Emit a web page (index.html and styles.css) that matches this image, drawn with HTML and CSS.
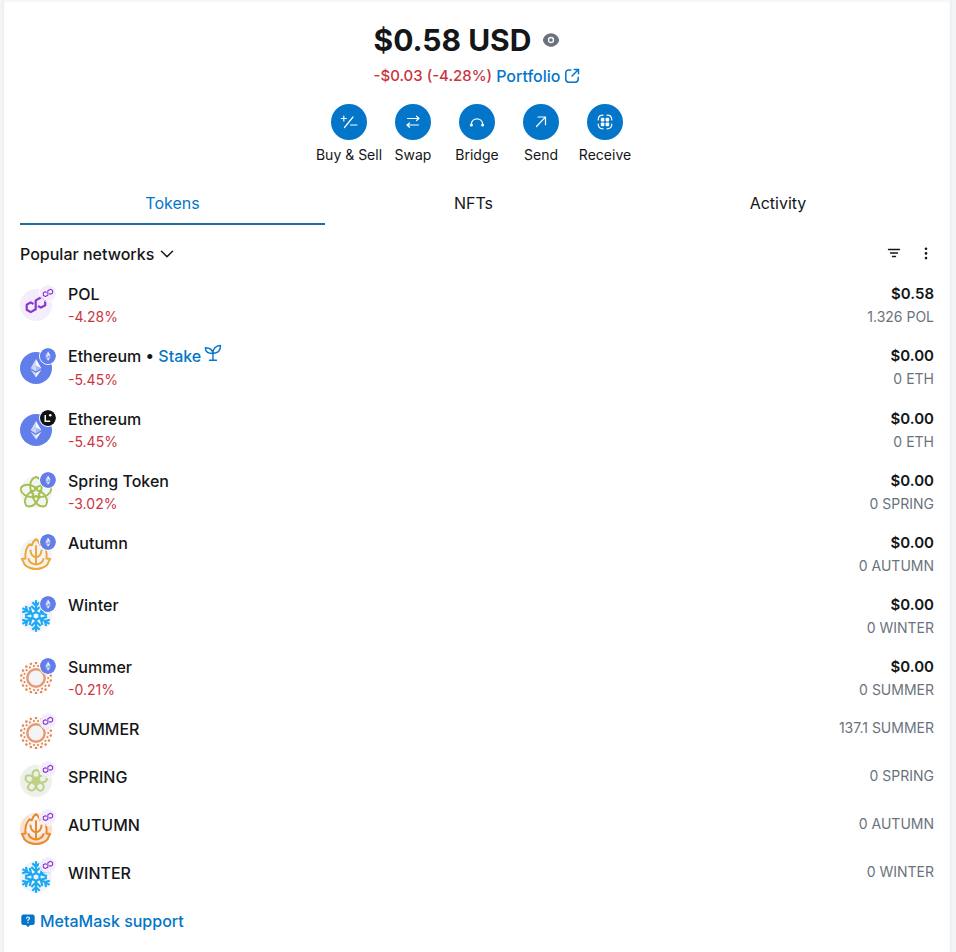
FILE: index.html
```html
<!DOCTYPE html>
<html lang="en">
<head>
<meta charset="utf-8">
<meta name="viewport" content="width=device-width, initial-scale=1">
<title>Wallet</title>
<link rel="stylesheet" href="styles.css">
</head>
<body>
<svg class="sprite" aria-hidden="true">
  <symbol id="eth" viewBox="0 0 32 32">
    <circle cx="16" cy="16" r="16" fill="#627eea"/>
    <path fill="#fff" fill-opacity=".7" d="M16 7l-5.400 9.200L16 13.800zM16 19.600V14l-5.400 2.300zM16 25.500v-4.600l-5.400-3.200z"/>
    <path fill="#fff" fill-opacity=".95" d="M16 7v6.800l5.400 2.400zM16 25.500v-4.600l5.400-3.200z"/>
    <path fill="#fff" fill-opacity=".45" d="M16 13.800v5.800l5.400-3.300z"/>
  </symbol>
  <symbol id="pol" viewBox="0 0 32 32">
    <circle cx="16" cy="16" r="16" fill="#f3edfc"/>
    <path fill="none" stroke="#8a35cf" stroke-width="2.200" stroke-linejoin="round" d="M13.500 15L10.700 13.400 6.700 15.700V20.800L10.700 23.100 15.700 20.300V11.400L20.900 8.500 25.200 10.900V16.200L20.900 18.600 18 17"/>
  </symbol>
  <symbol id="linea" viewBox="0 0 32 32">
    <circle cx="16" cy="16" r="16" fill="#121212"/>
    <path d="M10.500 10v12.500h10" fill="none" stroke="#fff" stroke-width="3"/>
    <circle cx="20.500" cy="10.500" r="2.500" fill="#fff"/>
  </symbol>
  <symbol id="flower" viewBox="0 0 32 32">
    <g fill="none" stroke="currentColor" stroke-width="1.900" stroke-linejoin="round">
      <path id="petal" d="M12 17.500C8.500 9.500 10.500 2.500 16 1c5.500 1.500 7.500 8.500 4 16.500"/>
      <use href="#petal" transform="rotate(72 16 17)"/>
      <use href="#petal" transform="rotate(144 16 17)"/>
      <use href="#petal" transform="rotate(216 16 17)"/>
      <use href="#petal" transform="rotate(288 16 17)"/>
      <path d="M16 11.500l1.700 3.400 3.700.5-2.700 2.600.7 3.700-3.400-1.800-3.400 1.800.7-3.700-2.700-2.600 3.700-.5z"/>
    </g>
  </symbol>
  <symbol id="spring" viewBox="0 0 32 32">
    <circle cx="16" cy="16" r="16" fill="#f2f4f6"/>
    <use href="#flower" color="#a5bf4e"/>
  </symbol>
  <symbol id="spring-small" viewBox="0 0 32 32">
    <circle cx="16" cy="16" r="16" fill="#eef0ec"/>
    <g fill="none" stroke="#bdd182" stroke-width="2">
      <path id="loop" d="M13.500 12.500C11.500 9 12.500 5.500 16 5s4.500 4 2.500 7.500L16 15.500z"/>
      <use href="#loop" transform="rotate(72 16 16)"/>
      <use href="#loop" transform="rotate(144 16 16)"/>
      <use href="#loop" transform="rotate(216 16 16)"/>
      <use href="#loop" transform="rotate(288 16 16)"/>
      <circle cx="16" cy="16" r="3.500"/>
    </g>
  </symbol>
  <symbol id="leaf" viewBox="0 0 32 32">
    <g fill="none" stroke="currentColor" stroke-width="2" stroke-linecap="round" stroke-linejoin="round">
      <path d="M16 1.200c-2 1.300-3.600 3.400-4.200 6L9.300 6.300C6.500 9.500 4.700 14 5.500 20.500L1.800 21C3.600 23.500 3.900 25 4.400 26.300c3 3.200 7 4.700 11.600 4.700s8.600-1.500 11.600-4.700c.5-1.300.8-2.800 2.600-5.300L26.500 20.500c.8-6.500-1-11-3.800-14.200l-2.500.9c-.6-2.600-2.200-4.700-4.200-6z"/>
      <path d="M16 8v18.500M16 19.500c-3.500-1-5.300-3.300-5.500-7M16 19.500c3.500-1 5.300-3.300 5.500-7M16 26.500c-4.500-.5-6.700-2.200-7.500-5.500M16 26.500c4.500-.5 6.700-2.200 7.500-5.500"/>
    </g>
  </symbol>
  <symbol id="autumn" viewBox="0 0 32 32">
    <circle cx="16" cy="16" r="16" fill="#f2f4f6"/>
    <use href="#leaf" color="#f0a73a"/>
  </symbol>
  <symbol id="autumn-pol" viewBox="0 0 32 32">
    <circle cx="16" cy="16" r="16" fill="#f9e0cd"/>
    <circle cx="16" cy="12" r="11" fill="#f6f1ef"/>
    <use href="#leaf" color="#e8892b"/>
  </symbol>
  <symbol id="winter" viewBox="0 0 32 32">
    <circle cx="16" cy="16" r="16" fill="#f2f4f6"/>
    <g fill="none" stroke="#1ba9f5" stroke-width="2.200">
      <path id="arm" d="M16 12V.3M12.300 2.200L16 5.800l3.700-3.600M11.300 6L16 10.500 20.700 6"/>
      <use href="#arm" transform="rotate(60 16 16)"/>
      <use href="#arm" transform="rotate(120 16 16)"/>
      <use href="#arm" transform="rotate(180 16 16)"/>
      <use href="#arm" transform="rotate(240 16 16)"/>
      <use href="#arm" transform="rotate(300 16 16)"/>
      <path d="M16 12l3.500 2v4L16 20l-3.500-2v-4z"/>
    </g>
  </symbol>
  <symbol id="summer" viewBox="0 0 32 32">
    <circle cx="16" cy="16" r="16" fill="#fdf6f1"/>
    <circle cx="16" cy="16" r="8.700" fill="#f2f4f6" stroke="#e59a76" stroke-width="2.400"/>
    <g fill="none" stroke="#dc8458" stroke-linecap="round">
      <circle cx="16" cy="16" r="12.200" stroke-width="2" pathLength="108" stroke-dasharray=".01 5.990"/>
      <circle cx="16" cy="16" r="15" stroke-width="2.400" pathLength="108" stroke-dasharray=".01 5.990" stroke-dashoffset="3"/>
    </g>
  </symbol>
</svg>

<main class="wallet">
  <section class="summary">
    <div class="balance">
      <div class="total">
        <h1>$0.58 USD</h1>
        <button class="plain" aria-label="Hide balance">
          <svg width="16" height="16" viewBox="0 0 16 16" fill="none"><path d="M8 1.300c3.800 0 6.300 2.400 7.600 5a3.800 3.800 0 0 1 0 3.400c-1.300 2.600-3.800 5-7.600 5s-6.300-2.400-7.600-5a3.800 3.800 0 0 1 0-3.400c1.300-2.600 3.800-5 7.600-5z" fill="#6a737d"/><circle cx="8" cy="8" r="2.500" stroke="#fff" stroke-width="1.300"/></svg>
        </button>
      </div>
      <div class="change">
        <span class="down">-$0.03 (-4.28%)</span>
        <a class="portfolio" href="#portfolio">Portfolio
          <svg width="16" height="16" viewBox="0 0 16 16" fill="none" stroke="currentColor" stroke-width="1.500" stroke-linecap="round" stroke-linejoin="round"><path d="M6.800 2H5Q1.800 2 1.800 5v6q0 3.200 3.200 3.200h6q3.200 0 3.200-3.200V9.200M8 8l6-6M10.300 1.500h4.200v4.200"/></svg>
        </a>
      </div>
    </div>
    <nav class="actions" aria-label="Actions">
      <button class="action"><span class="disc"><svg viewBox="0 0 18 18"><path d="M1.300 5.500h5M3.800 3v5M4.500 14.500L13 4M10.500 12h6.500"/></svg></span>Buy &amp; Sell</button>
      <button class="action"><span class="disc"><svg viewBox="0 0 18 18"><path d="M3.500 5.500h11.500M12.500 3.200L15 5.500l-2.500 2M14.500 12H3M5.500 10L3 12l2.500 2.300"/></svg></span>Swap</button>
      <button class="action"><span class="disc"><svg viewBox="0 0 18 18"><path d="M3.300 11.500c.4-7.500 11-7.500 11.400 0"/><g fill="#fff" stroke="none"><circle cx="3.400" cy="12" r="1.500"/><circle cx="14.600" cy="12" r="1.500"/></g></svg></span>Bridge</button>
      <button class="action"><span class="disc"><svg viewBox="0 0 18 18"><path d="M4.500 13.500L13.300 4.200M6 4h7.500v7.700"/></svg></span>Send</button>
      <button class="action"><span class="disc"><svg viewBox="0 0 18 18"><path d="M2.200 7Q2.200 2.200 7 2.200M11 2.200q4.800 0 4.800 4.800M15.800 11q0 4.800-4.800 4.800M7 15.800q-4.800 0-4.800-4.800"/><g fill="#fff" stroke="none"><rect x="4.800" y="4.800" width="3.600" height="3.600" rx="1"/><rect x="9.600" y="4.800" width="3.600" height="3.600" rx="1"/><rect x="4.800" y="9.600" width="3.600" height="3.600" rx="1"/><rect x="9.600" y="9.600" width="3.600" height="3.600" rx="1"/></g></svg></span>Receive</button>
    </nav>
  </section>

  <div class="tabs" role="tablist">
    <button class="tab selected" role="tab" aria-selected="true">Tokens</button>
    <button class="tab" role="tab" aria-selected="false">NFTs</button>
    <button class="tab" role="tab" aria-selected="false">Activity</button>
  </div>

  <div class="toolbar">
    <button class="networks">Popular networks
      <svg width="14" height="14" viewBox="0 0 14 14" fill="none" stroke="currentColor" stroke-width="1.500" stroke-linecap="round" stroke-linejoin="round"><path d="M1.500 4.200L7 9.700l5.500-5.500"/></svg>
    </button>
    <div class="tools">
      <button class="plain" aria-label="Sort"><svg width="16" height="16" viewBox="0 0 16 16" fill="none" stroke="#141618" stroke-width="1.400" stroke-linecap="round"><path d="M2.500 3.500h11M4.500 7h7M6.500 10.500h3"/></svg></button>
      <button class="plain" aria-label="More options"><svg width="16" height="16" viewBox="0 0 16 16" fill="#141618"><circle cx="8" cy="2.700" r="1.300"/><circle cx="8" cy="7.400" r="1.300"/><circle cx="8" cy="12.100" r="1.300"/></svg></button>
    </div>
  </div>

  <ul class="tokens">
    <li class="token">
      <span class="icon"><svg class="coin"><use href="#pol"/></svg><svg class="badge"><use href="#pol"/></svg></span>
      <div class="info"><span class="name">POL</span><span class="percent">-4.28%</span></div>
      <div class="value"><span class="fiat">$0.58</span><span class="amount">1.326 POL</span></div>
    </li>
    <li class="token">
      <span class="icon"><svg class="coin"><use href="#eth"/></svg><svg class="badge"><use href="#eth"/></svg></span>
      <div class="info"><span class="name stakeable">Ethereum • <a href="#stake">Stake<svg class="sprout" width="18" height="18" viewBox="0 0 18 18" fill="none" stroke="currentColor" stroke-width="1.400" stroke-linecap="round" stroke-linejoin="round"><path d="M9 16V9.500M5.500 16.300h7M9 9.500C9 5 11.500 1.800 16.500 1.500c.2 4.500-2.500 7.500-7.500 8zM9 9.500C8.500 6 5.500 3.700 1.300 3.700c.2 3.800 3 6 7.700 5.800z"/></svg></a></span><span class="percent">-5.45%</span></div>
      <div class="value"><span class="fiat">$0.00</span><span class="amount">0 ETH</span></div>
    </li>
    <li class="token">
      <span class="icon"><svg class="coin"><use href="#eth"/></svg><svg class="badge"><use href="#linea"/></svg></span>
      <div class="info"><span class="name">Ethereum</span><span class="percent">-5.45%</span></div>
      <div class="value"><span class="fiat">$0.00</span><span class="amount">0 ETH</span></div>
    </li>
    <li class="token">
      <span class="icon"><svg class="coin"><use href="#spring"/></svg><svg class="badge"><use href="#eth"/></svg></span>
      <div class="info"><span class="name">Spring Token</span><span class="percent">-3.02%</span></div>
      <div class="value"><span class="fiat">$0.00</span><span class="amount">0 SPRING</span></div>
    </li>
    <li class="token">
      <span class="icon"><svg class="coin"><use href="#autumn"/></svg><svg class="badge"><use href="#eth"/></svg></span>
      <div class="info"><span class="name">Autumn</span></div>
      <div class="value"><span class="fiat">$0.00</span><span class="amount">0 AUTUMN</span></div>
    </li>
    <li class="token">
      <span class="icon"><svg class="coin"><use href="#winter"/></svg><svg class="badge"><use href="#eth"/></svg></span>
      <div class="info"><span class="name">Winter</span></div>
      <div class="value"><span class="fiat">$0.00</span><span class="amount">0 WINTER</span></div>
    </li>
    <li class="token">
      <span class="icon"><svg class="coin"><use href="#summer"/></svg><svg class="badge"><use href="#eth"/></svg></span>
      <div class="info"><span class="name">Summer</span><span class="percent">-0.21%</span></div>
      <div class="value"><span class="fiat">$0.00</span><span class="amount">0 SUMMER</span></div>
    </li>
    <li class="token">
      <span class="icon"><svg class="coin"><use href="#summer"/></svg><svg class="badge"><use href="#pol"/></svg></span>
      <div class="info"><span class="name">SUMMER</span></div>
      <div class="value"><span class="amount">137.1 SUMMER</span></div>
    </li>
    <li class="token">
      <span class="icon"><svg class="coin"><use href="#spring-small"/></svg><svg class="badge"><use href="#pol"/></svg></span>
      <div class="info"><span class="name">SPRING</span></div>
      <div class="value"><span class="amount">0 SPRING</span></div>
    </li>
    <li class="token">
      <span class="icon"><svg class="coin"><use href="#autumn-pol"/></svg><svg class="badge"><use href="#pol"/></svg></span>
      <div class="info"><span class="name">AUTUMN</span></div>
      <div class="value"><span class="amount">0 AUTUMN</span></div>
    </li>
    <li class="token">
      <span class="icon"><svg class="coin"><use href="#winter"/></svg><svg class="badge"><use href="#pol"/></svg></span>
      <div class="info"><span class="name">WINTER</span></div>
      <div class="value"><span class="amount">0 WINTER</span></div>
    </li>
  </ul>

  <a class="support" href="#support">
    <svg width="16" height="16" viewBox="0 0 16 16"><path d="M3.500 1.500h9q2.200 0 2.200 2.200v6q0 2.200-2.200 2.200H10L8 14.200 6 11.900H3.500q-2.200 0-2.200-2.200v-6q0-2.200 2.200-2.200z" fill="currentColor"/><path d="M6.500 5.200c.2-1.700 3-1.600 3 .1 0 1.100-1.500 1.200-1.500 2.300M8 9.200v.5" fill="none" stroke="#fff" stroke-width="1.100" stroke-linecap="round"/></svg>
    MetaMask support
  </a>
</main>
</body>
</html>
```
FILE: styles.css
```css
* {
  box-sizing: border-box;
}

body {
  margin: 0;
  background: #f2f4f6;
  color: #141618;
  font-family: Inter, "Liberation Sans", sans-serif;
  font-size: 16px;
  line-height: 24px;
}

button {
  padding: 0;
  border: 0;
  background: none;
  color: inherit;
  font: inherit;
  cursor: pointer;
}

a {
  color: #0376c9;
  font-weight: 500;
  text-decoration: none;
}

svg {
  display: block;
  flex: none;
}

.sprite {
  position: absolute;
  width: 0;
  height: 0;
}

.wallet {
  min-height: 100vh;
  margin: 0 6px 0 4px;
  padding: 20px 16px 16px;
  background: #fff;
  box-shadow: 0 0 4px rgba(0, 0, 0, 0.06), inset 0 2px 2px #f5f6f8;
}

.summary {
  display: flex;
  flex-direction: column;
  align-items: center;
}

.total {
  display: flex;
  align-items: center;
  gap: 12px;
}

h1 {
  margin: 0;
  font-size: 30px;
  font-weight: 700;
  line-height: 40px;
}

.change {
  display: flex;
  align-items: center;
  gap: 4px;
  margin-top: 4px;
  font-weight: 500;
}

.down {
  font-size: 15px;
}

.down,
.percent {
  color: #ca3542;
}

.portfolio {
  display: flex;
  align-items: center;
  gap: 4px;
}

.actions {
  display: flex;
  margin-top: 16px;
}

.action {
  display: flex;
  flex-direction: column;
  align-items: center;
  gap: 4px;
  width: 64px;
  font-size: 14px;
  line-height: 22px;
  white-space: nowrap;
}

.disc {
  display: grid;
  place-items: center;
  width: 36px;
  height: 36px;
  border-radius: 50%;
  background: #0376c9;
}

.disc svg {
  width: 18px;
  height: 18px;
  fill: none;
  stroke: #fff;
  stroke-width: 1.2;
  stroke-linecap: round;
  stroke-linejoin: round;
}

.tabs {
  display: grid;
  grid-template-columns: 305fr 297fr 312fr;
  margin-top: 17px;
}

.tab {
  padding: 8px 0;
  border-bottom: 2px solid transparent;
}

.selected {
  border-color: #1c6f9f;
  color: #0376c9;
}

.toolbar {
  display: flex;
  align-items: center;
  justify-content: space-between;
  padding: 17px 0 8px;
}

.networks {
  display: flex;
  align-items: center;
  gap: 6px;
  font-weight: 500;
}

.tools {
  display: flex;
  gap: 16px;
}

.tokens {
  margin: 0;
  padding: 0;
  list-style: none;
}

.token {
  display: flex;
  gap: 16px;
  padding: 8px 0;
}

.icon {
  position: relative;
  align-self: center;
}

.coin {
  width: 32px;
  height: 32px;
}

.badge {
  position: absolute;
  top: -5px;
  right: -5px;
  width: 18px;
  height: 18px;
  border: 1px solid #fff;
  border-radius: 50%;
}

.info,
.value {
  display: flex;
  flex-direction: column;
}

.info {
  flex: 1;
}

.name,
.fiat {
  font-weight: 500;
}

.stakeable {
  line-height: 25px;
}

.sprout {
  display: inline-block;
  margin-left: 3px;
}

.fiat {
  font-size: 15px;
  font-weight: 600;
}

.value {
  text-align: right;
}

.percent,
.amount {
  font-size: 14px;
  line-height: 22px;
}

.amount {
  color: #6a737d;
}

.support {
  display: inline-flex;
  align-items: center;
  gap: 4px;
  margin-top: 8px;
}
```
